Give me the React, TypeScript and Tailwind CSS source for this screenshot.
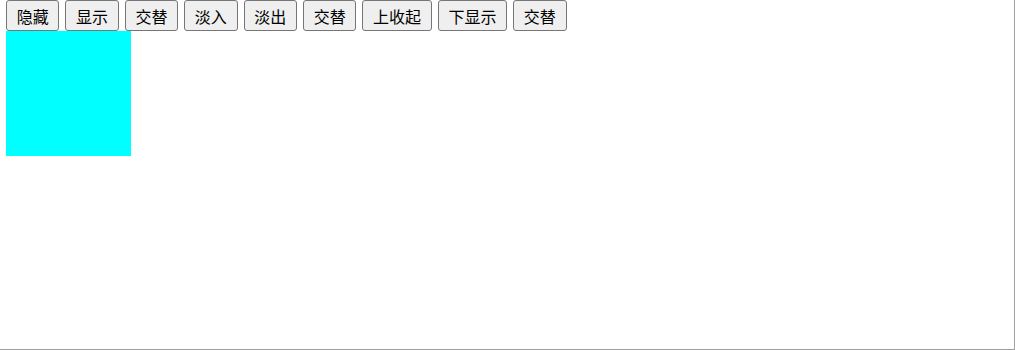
import React from "react";

const labels = ["隐藏", "显示", "交替", "淡入", "淡出", "交替", "上收起", "下显示", "交替"];

export default function App() {
  return (
    <div
      className="w-[1015px] h-[350px] border-r border-b border-[#a0a0a0] bg-white"
      style={{ fontFamily: '"Noto Sans CJK SC", "Noto Sans", sans-serif' }}
    >
      <div className="flex gap-[6px] pl-[6px]">
        {labels.map((l, i) => (
          <button
            key={i}
            className="h-[31px] px-[9.69px] border border-[#767676] bg-[#efefef] rounded-[3px] text-[16px] leading-none text-black flex items-center justify-center pt-[1px] whitespace-nowrap"
          >
            {l}
          </button>
        ))}
      </div>
      <div className="ml-[6px] w-[125px] h-[125px] bg-[#00ffff]" />
    </div>
  );
}
